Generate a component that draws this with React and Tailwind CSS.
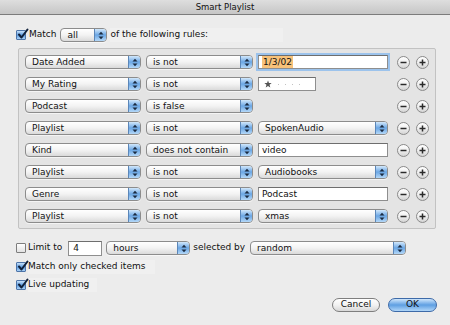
import React from "react";

function Stepper() {
  return (
    <div className="flex w-[12px] flex-col items-center justify-center gap-[1px] border-l border-[#5b86b8] bg-gradient-to-b from-[#d2e8fb] via-[#6aa6e4] to-[#b4d8f8]">
      <svg width="6" height="9" viewBox="0 0 6 9">
        <path d="M0.5 3.5 L3 0.8 L5.5 3.5 Z" fill="#1a2a40" />
        <path d="M0.5 5.5 L3 8.2 L5.5 5.5 Z" fill="#1a2a40" />
      </svg>
    </div>
  );
}

function Popup({ label, className }) {
  return (
    <div
      className={`flex h-[14px] shrink-0 items-stretch overflow-hidden rounded-[4px] border border-[#8c8c8c] bg-gradient-to-b from-white via-[#f3f3f3] to-[#dadada] shadow-[0_1px_0_rgba(255,255,255,0.6)] ${className}`}
    >
      <span className="flex-1 truncate pl-[6px] text-[9px] leading-[12px] text-[#111]">{label}</span>
      <Stepper />
    </div>
  );
}

function TextField({ children, className }) {
  return (
    <div
      className={`flex h-[14px] shrink-0 items-center border border-[#8e8e8e] border-t-[#6e6e6e] bg-white pl-[3px] text-[9px] leading-[12px] text-[#111] ${className}`}
    >
      {children}
    </div>
  );
}

function CircleBtn({ plus }) {
  return (
    <div className="flex h-[13px] w-[13px] shrink-0 items-center justify-center rounded-full border border-[#8a8a8a] bg-gradient-to-b from-white via-[#efefef] to-[#d4d4d4]">
      <svg width="9" height="9" viewBox="0 0 9 9">
        <path d="M1.5 4.5 H7.5" stroke="#2a2a2a" strokeWidth="1.5" />
        {plus && <path d="M4.5 1.5 V7.5" stroke="#2a2a2a" strokeWidth="1.5" />}
      </svg>
    </div>
  );
}

function Checkbox({ checked }) {
  if (!checked) {
    return (
      <div className="h-[10px] w-[10px] shrink-0 rounded-[1px] border border-[#7d7d7d] bg-gradient-to-b from-white to-[#e2e2e2]" />
    );
  }
  return (
    <div className="relative h-[10px] w-[10px] shrink-0 rounded-[1px] border border-[#4d74a8] bg-gradient-to-b from-[#c8e2fa] via-[#5d9ce0] to-[#a8d0f6]">
      <svg className="absolute left-[0px] top-[-3px]" width="12" height="12" viewBox="0 0 12 12">
        <path d="M2 6.5 L4.5 9.5 L10.5 1.5" stroke="#10203a" strokeWidth="2" fill="none" strokeLinecap="round" strokeLinejoin="round" />
      </svg>
    </div>
  );
}

const rules = [
  { field: "Date Added", op: "is not", kind: "date", value: "1/3/02" },
  { field: "My Rating", op: "is not", kind: "rating" },
  { field: "Podcast", op: "is false", kind: "none" },
  { field: "Playlist", op: "is not", kind: "popup", value: "SpokenAudio" },
  { field: "Kind", op: "does not contain", kind: "text", value: "video" },
  { field: "Playlist", op: "is not", kind: "popup", value: "Audiobooks" },
  { field: "Genre", op: "is not", kind: "text", value: "Podcast" },
  { field: "Playlist", op: "is not", kind: "popup", value: "xmas" },
];

function Star() {
  return (
    <svg width="8" height="8" viewBox="0 0 10 10">
      <path d="M5 0.5 L6.2 3.8 L9.6 3.9 L6.9 6 L7.9 9.4 L5 7.4 L2.1 9.4 L3.1 6 L0.4 3.9 L3.8 3.8 Z" fill="#555" />
    </svg>
  );
}

function ValueCell({ r }) {
  if (r.kind === "date") {
    return (
      <TextField className="w-[130px] border-[#5f95d2] shadow-[0_0_0_2px_#9cc3ec]">
        <span className="bg-[#f8c27a] px-[1px]">{r.value}</span>
      </TextField>
    );
  }
  if (r.kind === "rating") {
    return (
      <TextField className="w-[58px] pl-[5px]">
        <Star />
        <div className="ml-[6px] flex gap-[6px]">
          <span className="h-[1px] w-[1px] bg-[#c2c2c2]" />
          <span className="h-[1px] w-[1px] bg-[#c2c2c2]" />
          <span className="h-[1px] w-[1px] bg-[#c2c2c2]" />
          <span className="h-[1px] w-[1px] bg-[#c2c2c2]" />
        </div>
      </TextField>
    );
  }
  if (r.kind === "popup") {
    return <Popup label={r.value} className="w-[130px]" />;
  }
  if (r.kind === "text") {
    return <TextField className="w-[130px]">{r.value}</TextField>;
  }
  return null;
}

export default function App() {
  return (
    <div className="flex h-[325px] w-[450px] flex-col overflow-hidden bg-[#ececec] font-['DejaVu_Sans',sans-serif] text-[9px] text-[#111]">
      {/* Title bar */}
      <div className="flex h-[15px] shrink-0 items-center justify-center border-b border-[#7c7c7c] bg-gradient-to-b from-[#dedede] to-[#c6c6c6] text-[8.5px] text-[#111]">
        Smart Playlist
      </div>

      {/* Match row */}
      <div className="mt-[13px] flex h-[14px] items-center pl-[16px]">
        <Checkbox checked />
        <span className="ml-[3px]">Match</span>
        <Popup label="all" className="ml-[4px] w-[47px]" />
        <span className="ml-[3px] bg-[#f0f0f0] pr-[75px]">of the following rules:</span>
      </div>

      {/* Rules box */}
      <div className="ml-[18px] mt-[6px] flex h-[181px] w-[418px] flex-col gap-[8px] rounded-[2px] border border-[#c2c2c2] bg-[#e4e4e4] pl-[6px] pt-[6px]">
        {rules.map((r, i) => (
          <div key={i} className="flex h-[14px] items-center">
            <Popup label={r.field} className="w-[116px]" />
            <Popup label={r.op} className="ml-[5px] w-[107px]" />
            <div className="ml-[5px] flex w-[130px] shrink-0">
              <ValueCell r={r} />
            </div>
            <div className="ml-[9px]">
              <CircleBtn />
            </div>
            <div className="ml-[6px]">
              <CircleBtn plus />
            </div>
          </div>
        ))}
      </div>

      {/* Limit row */}
      <div className="mt-[12px] flex h-[14px] items-center pl-[16px]">
        <Checkbox />
        <span className="ml-[2px]">Limit to</span>
        <TextField className="ml-[6px] h-[15px] w-[34px] pl-[4px]">4</TextField>
        <Popup label="hours" className="ml-[4px] w-[84px]" />
        <span className="ml-[3px]">selected by</span>
        <Popup label="random" className="ml-[5px] w-[156px]" />
      </div>

      <div className="mt-[5px] flex h-[14px] items-center pl-[16px]">
        <Checkbox checked />
        <span className="ml-[2px] bg-[#f0f0f0] pr-[10px]">Match only checked items</span>
      </div>

      <div className="mt-[4px] flex h-[14px] items-center pl-[16px]">
        <Checkbox checked />
        <span className="ml-[2px] bg-[#f0f0f0] pr-[8px]">Live updating</span>
      </div>

      {/* Buttons */}
      <div className="mt-[6px] flex justify-end pr-[13px]">
        <div className="flex h-[14px] w-[48px] items-center justify-center rounded-full border border-[#7e7e7e] bg-gradient-to-b from-white via-[#f2f2f2] to-[#d8d8d8] text-[9px]">
          Cancel
        </div>
        <div className="ml-[8px] flex h-[14px] w-[49px] items-center justify-center rounded-full border border-[#3d6aa8] bg-gradient-to-b from-[#cfe6fb] via-[#5e9fe2] to-[#b0d6f8] text-[9px]">
          OK
        </div>
      </div>
    </div>
  );
}
